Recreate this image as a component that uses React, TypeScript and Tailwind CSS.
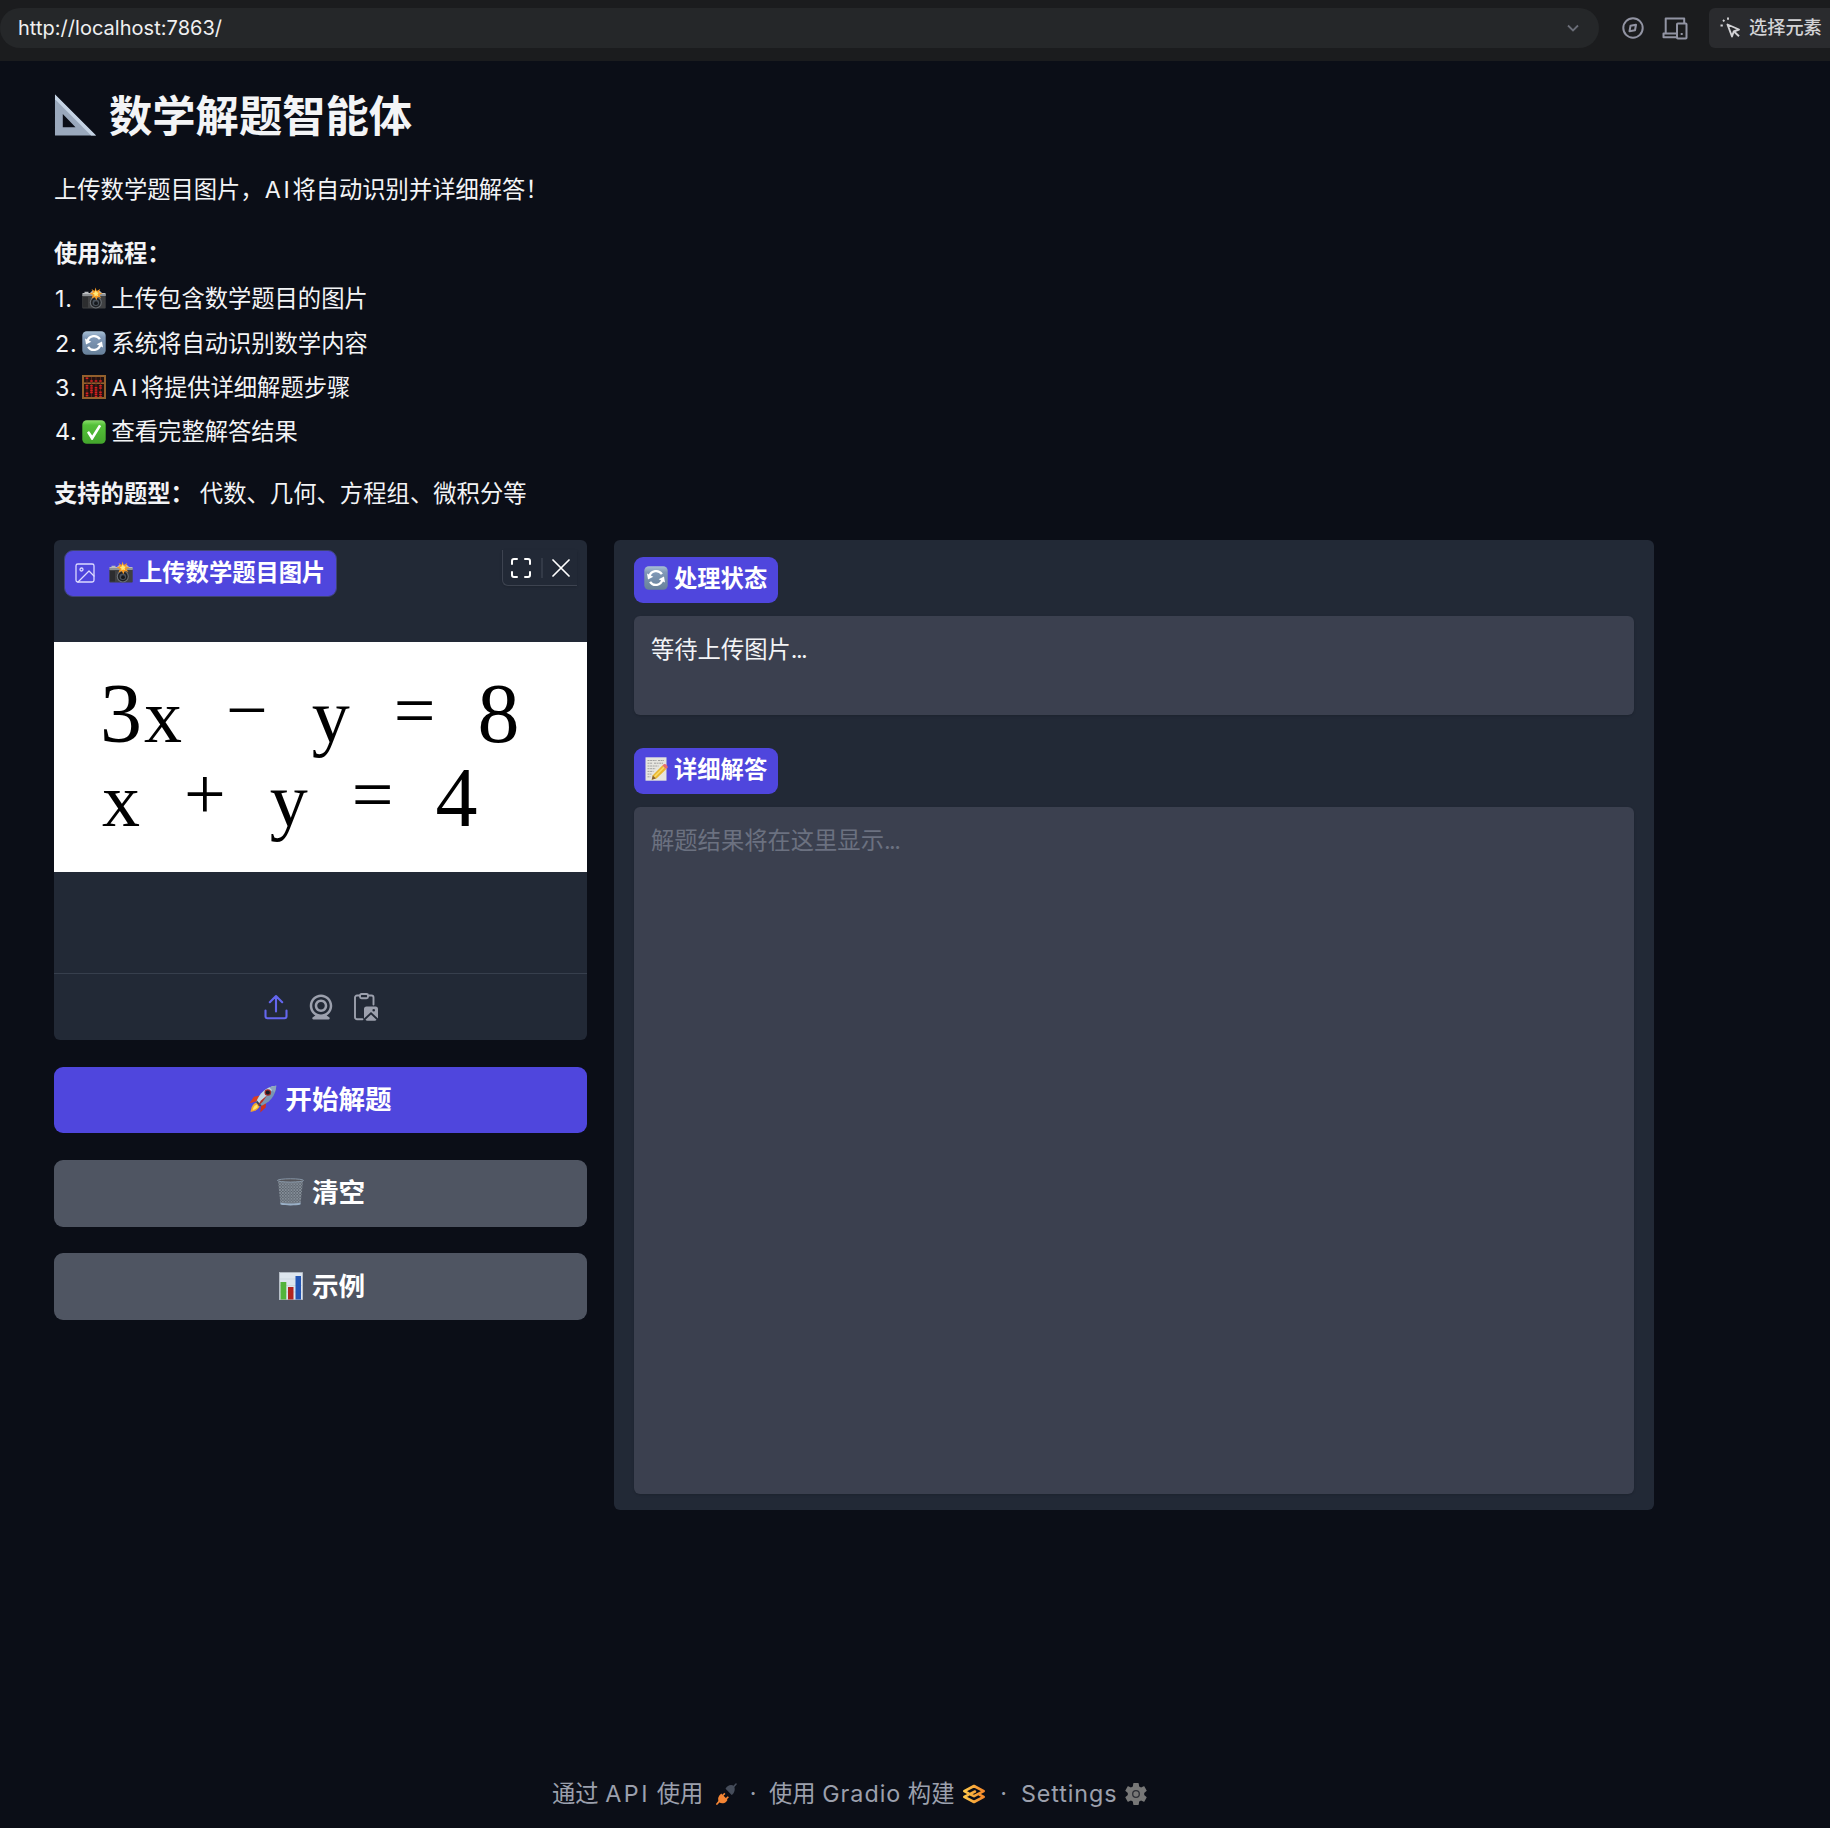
import React from 'react';

type IconProps = { className?: string };

const Ruler = ({ className }: IconProps) => (
  <svg viewBox="0 0 44 44" className={className}>
    <path fillRule="evenodd" d="M1 1 43 43H1ZM9 21V34.500H22Z" fill="#9aa8bc" />
    <path d="M1 1 43 43H38L1 6Z" fill="#c5d3e4" />
  </svg>
);

const Camera = ({ className }: IconProps) => (
  <svg viewBox="0 0 24 24" className={className}>
    <path d="M0.500 7V6h2V4.800h4V6H8l2-2h8l2 2h3.500v3Z" fill="#b9bcbf" />
    <rect x="0.300" y="7.500" width="23.400" height="14" rx="0.800" fill="#3f4042" />
    <path d="M0.300 7h23.400v2H0.300Z" fill="#8e9194" />
    <rect x="1" y="10" width="5" height="10.500" fill="#2c2d2f" />
    <circle cx="13.800" cy="15.500" r="6" fill="#6c7075" />
    <circle cx="13.800" cy="15.500" r="4.900" fill="#1f2124" />
    <circle cx="13.800" cy="15.800" r="3.300" fill="#4a525b" />
    <circle cx="14" cy="16.200" r="1.900" fill="#15181c" />
    <path d="m13.500 0.500 1.200 3.600 3.500-2-1.300 3.400 3.600.8-3.200 1.700 2 3-3.500-1.200-1.400 3.400-1.600-3.200-3.300 1.400 1.400-3.300L7.500 6.600l3.500-1.300L9.600 1.900l3 2Z" fill="#f59a23" />
    <path d="m13.800 3 1 2.300 2 .4-1.200 1.500.5 2-2-.8-1.700 1.200v-2.200l-1.700-1.200 2-.7Z" fill="#ffe879" />
  </svg>
);

const Refresh = ({ className }: IconProps) => (
  <svg viewBox="0 0 24 24" className={className}>
    <defs>
      <linearGradient id="refreshBg" x1="0" y1="0" x2="0" y2="1">
        <stop offset="0" stopColor="#a9c1d6" />
        <stop offset="0.250" stopColor="#8199b7" />
        <stop offset="1" stopColor="#67809a" />
      </linearGradient>
    </defs>
    <rect x="0.300" y="0.300" width="23.400" height="23.400" rx="4.500" fill="url(#refreshBg)" />
    <g fill="none" stroke="#fff" strokeWidth="2.300">
      <path d="M5.500 10.200a6.900 6.900 0 0 1 12.400-2" />
      <path d="M18.500 13.800a6.900 6.900 0 0 1-12.400 2" />
    </g>
    <path d="m3 7.500 1 6 5.300-2.800ZM21 16.500l-1-6-5.300 2.800Z" fill="#fff" />
  </svg>
);

const Abacus = ({ className }: IconProps) => (
  <svg viewBox="0 0 24 24" className={className}>
    <rect x="1" y="1" width="22" height="22" fill="#241210" stroke="#93602c" strokeWidth="2" />
    <path d="M1 8.200h22" stroke="#93602c" strokeWidth="1.600" />
    <path d="M5 2v20M9.500 2v20M14 2v20M18.500 2v20" stroke="#6d2a20" strokeWidth="0.800" />
    <g stroke="#d81f1f" strokeWidth="2.600" strokeDasharray="1.500 0.700">
      <path d="M5 2.500v2M9.500 5.300v2M14 5.300v2M18.500 5.300v2" />
      <path d="M5 10v4M9.500 10v9M14 12v10M18.500 10v4.400M5 17.500v4.500M18.500 16.500v5.500" />
    </g>
  </svg>
);

const Check = ({ className }: IconProps) => (
  <svg viewBox="0 0 24 24" className={className}>
    <defs>
      <linearGradient id="checkBg" x1="0" y1="0" x2="0" y2="1">
        <stop offset="0" stopColor="#8ce06c" />
        <stop offset="0.200" stopColor="#55c13a" />
        <stop offset="1" stopColor="#43a52c" />
      </linearGradient>
    </defs>
    <rect x="0.300" y="0.300" width="23.400" height="23.400" rx="4.500" fill="url(#checkBg)" />
    <path d="m5 12.600 2-1.500 3.200 4.400L17 4.800l2.200 1.100-8.600 14h-1Z" fill="#fff" />
  </svg>
);

const Memo = ({ className }: IconProps) => (
  <svg viewBox="0 0 24 24" className={className}>
    <rect x="1.500" y="0.300" width="21" height="23.400" fill="#e6e5df" />
    <path d="M3.500 3.500h9M14 3.500h6M3.500 6.200h5M10 6.200h9M3.500 9h11M3.500 11.700h8M3.500 14.400h6M3.500 17.100h4M3.500 19.800h3" stroke="#989898" strokeWidth="0.900" strokeDasharray="2 .6" />
    <path d="m7.700 22.800 1.100-4.600L18.300 8.600l3.800 3.600-9.600 9.300Z" fill="#e9b62f" />
    <path d="m9.800 19.200 9.900-9.700 1.100 1.100-9.700 9.700Z" fill="#f8db68" />
    <path d="m18.300 8.600 1.500-1.300c1.500-1.200 4.800 1.600 3.700 3.500l-1.400 1.400Z" fill="#e6716e" />
    <path d="m7.700 22.800 1.100-4.200 3 2.800Z" fill="#846137" />
  </svg>
);

const Rocket = ({ className }: IconProps) => (
  <svg viewBox="0 0 28 28" className={className}>
    <path d="m11 10.500-6 1.200-4.500 6.500 7.500-2Z" fill="#dd3f20" />
    <path d="m17 17-.3 5.500-5.500 5 1-7.500Z" fill="#cf321d" />
    <path d="M7.800 17.200C3.700 18.500 2.500 22 1.500 27c5-1 8.200-2.500 9.500-6.200Z" fill="#f3a52c" />
    <path d="M7.800 19.400c-2.600 1-3.600 3.200-4.100 5.600 2.800-.6 4.700-1.600 5.600-4Z" fill="#ffe66c" />
    <path d="M7 17.500C10.500 8 17 1.500 27.300.7 27 11 20 18 10.800 21.500Z" fill="#7895b2" />
    <path d="M7 17.500C10.500 8 17 1.500 27.300.7L9 19.500Z" fill="#c5d7e5" />
    <path d="M27.300.7c-2.600.2-5 .8-7 1.700l5.200 5c1-2.200 1.600-4.300 1.800-6.700Z" fill="#8da6be" />
    <path d="M7 17.500 10.800 21.500 12.700 20.700 7.900 15.500Z" fill="#3b4655" />
    <circle cx="18.800" cy="7.500" r="3.300" fill="#a32927" />
    <circle cx="18.800" cy="7.500" r="2.100" fill="#171b22" />
    <path d="m12 15.500 6-5-4.400 6.200-5.400 5Z" fill="#b92f24" />
  </svg>
);

const Trash = ({ className }: IconProps) => (
  <svg viewBox="0 0 28 28" className={className}>
    <defs>
      <pattern id="mesh" width="3" height="3" patternUnits="userSpaceOnUse">
        <rect width="3" height="3" fill="#5a626c" />
        <path d="M0 0 3 3M3 0 0 3" stroke="#9aa4af" strokeWidth="0.650" />
      </pattern>
    </defs>
    <path d="m1 2 2.600 24.500c4 1.500 16.800 1.500 20.800 0L27 2Z" fill="url(#mesh)" />
    <path d="M3.500 25c5 1.400 16 1.400 21 0l-.2 2c-5 1.200-15.600 1.200-20.600 0Z" fill="#9ab0c7" />
    <ellipse cx="14" cy="2" rx="13.500" ry="1.700" fill="#545459" stroke="#8e9fb1" strokeWidth="0.900" />
  </svg>
);

const Chart = ({ className }: IconProps) => (
  <svg viewBox="0 0 24 28" className={className}>
    <rect x="0.300" y="0.500" width="23.400" height="27.200" fill="#dce5ee" stroke="#bcc4cd" strokeWidth="0.600" />
    <path d="M1 7h22M1 13.500h22M1 20h22" stroke="#c5ced7" strokeWidth="0.600" />
    <rect x="1.500" y="10" width="5.800" height="17.500" fill="#53b43b" />
    <rect x="9" y="15" width="5.500" height="12.500" fill="#b12420" />
    <rect x="16.500" y="4" width="5.500" height="23.500" fill="#2356b5" />
  </svg>
);

const Plug = ({ className }: IconProps) => (
  <svg viewBox="0 0 22 24" className={className}>
    <path d="m1 22.500 3-3.500" stroke="#f58534" strokeWidth="1.800" strokeLinecap="round" />
    <path d="M3.300 20.700c-1.500-2.500-1.500-5 .2-7.200l2-2 1.200 1.200 2-2 1.200 1.200-2 2 2.400 2.400 2-2 1.200 1.200-2 2 .5.700-1.300 1.800c-2 2-5 2.300-7.400.7Z" fill="#f58534" />
    <path d="m21 1.500-3 3.500" stroke="#454c5a" strokeWidth="1.600" strokeLinecap="round" />
    <path d="M10 6.400c2-3.500 5.600-4.700 8.800-2.900 1.700 3.200.7 7.200-2.400 9.500Z" fill="#454c5a" />
  </svg>
);

const GradioMark = ({ className }: IconProps) => (
  <svg viewBox="0 0 24 20" className={className}>
    <defs>
      <linearGradient id="gradio" x1="0" y1="0" x2="1" y2="0">
        <stop offset="0" stopColor="#fdc84b" />
        <stop offset="1" stopColor="#f5892b" />
      </linearGradient>
    </defs>
    <g fill="none" stroke="url(#gradio)" strokeWidth="2.600" strokeLinejoin="round" strokeLinecap="round">
      <path d="M6.500 9.300 2.300 7.200 12 2l9.700 5.200-9.700 5-4.200-2 5.200-2.700" />
      <path d="M17.500 10.700l4.200 2.100L12 18l-9.700-5.200 4-2" />
    </g>
  </svg>
);

const Gear = ({ className }: IconProps) => (
  <svg viewBox="2 1.800 20 20.400" className={className}>
    <path fill="#777777" d="M19.430 12.980c.04-.32.070-.64.070-.98s-.03-.66-.07-.98l2.110-1.650c.19-.15.24-.42.120-.64l-2-3.460c-.12-.22-.39-.3-.61-.22l-2.490 1c-.52-.4-1.080-.73-1.690-.98l-.38-2.650A.49.49 0 0 0 14 2h-4c-.25 0-.46.180-.49.420l-.38 2.650c-.61.250-1.170.590-1.690.980l-2.490-1c-.23-.09-.49 0-.61.220l-2 3.460c-.13.220-.07.490.120.640l2.110 1.650c-.04.320-.07.650-.07.980s.03.660.070.980l-2.110 1.650c-.19.150-.24.420-.12.640l2 3.460c.12.220.39.300.61.220l2.490-1c.52.400 1.080.730 1.690.980l.38 2.650c.03.240.24.420.49.420h4c.25 0 .46-.18.490-.42l.38-2.650c.61-.25 1.170-.59 1.690-.98l2.490 1c.23.090.49 0 .61-.22l2-3.460c.12-.22.070-.49-.12-.64Z" />
    <circle cx="12" cy="12" r="3" fill="#777777" stroke="#2c2e35" strokeWidth="1.200" />
  </svg>
);

const ImageIcon = ({ className }: IconProps) => (
  <svg viewBox="0 0 24 24" fill="none" stroke="currentColor" strokeWidth="1.300" strokeLinecap="round" strokeLinejoin="round" className={className}>
    <rect x="3" y="3" width="18" height="18" rx="1.800" />
    <circle cx="8.500" cy="8.500" r="1.500" />
    <path d="m21 15-5-5L5 21" />
  </svg>
);

const Upload = ({ className }: IconProps) => (
  <svg viewBox="0 0 24 26" fill="none" stroke="currentColor" strokeWidth="2.100" strokeLinecap="round" strokeLinejoin="round" className={className}>
    <path d="M12 17.500V2M5.800 8.200 12 2l6.200 6.200M1.500 16.500v5.800a2 2 0 0 0 2 2h17a2 2 0 0 0 2-2v-5.800" />
  </svg>
);

const Webcam = ({ className }: IconProps) => (
  <svg viewBox="0 0 24 24" fill="currentColor" className={className}>
    <path d="M12 2c-4.963 0-9 4.038-9 9c0 3.328 1.820 6.232 4.513 7.790l-2.067 1.378A1 1 0 0 0 6 22h12a1 1 0 0 0 .555-1.832l-2.067-1.378C19.180 17.232 21 14.328 21 11c0-4.962-4.037-9-9-9zm0 16c-3.859 0-7-3.141-7-7c0-3.860 3.141-7 7-7s7 3.140 7 7c0 3.859-3.141 7-7 7z" />
    <path d="M12 6c-2.757 0-5 2.243-5 5s2.243 5 5 5s5-2.243 5-5s-2.243-5-5-5zm0 8c-1.654 0-3-1.346-3-3s1.346-3 3-3s3 1.346 3 3s-1.346 3-3 3z" />
  </svg>
);

const PasteImage = ({ className }: IconProps) => (
  <svg viewBox="0 0 24 28" className={className}>
    <path d="M8.500 26.200H3a2 2 0 0 1-2-2V4.500a2 2 0 0 1 2-2h2.500M14.500 2.500H17.500a2 2 0 0 1 2 2V11.500" fill="none" stroke="currentColor" strokeWidth="1.900" strokeLinecap="round" />
    <rect x="6" y="1" width="8" height="4.200" rx="1.500" fill="none" stroke="currentColor" strokeWidth="1.900" />
    <path fillRule="evenodd" d="M12.500 13.500h9a2.500 2.500 0 0 1 2.500 2.500v9.500l-7-6.500-7 6.500V16a2.500 2.500 0 0 1 2.500-2.500Zm7.200 2.500a1.300 1.300 0 1 0 0 2.600 1.300 1.300 0 0 0 0-2.600Z" fill="currentColor" />
    <path d="m17 21.500 5.500 5.300c-.4.600-1 .9-1.700.9h-7.600c-.7 0-1.300-.3-1.700-.9Z" fill="currentColor" />
  </svg>
);

const Compass = ({ className }: IconProps) => (
  <svg viewBox="0 0 22 22" fill="none" stroke="currentColor" strokeWidth="2" strokeLinejoin="round" className={className}>
    <circle cx="11" cy="11" r="9.700" />
    <path d="m8.500 8.700 5.500-1-1 5.600-5.500 1Z" />
  </svg>
);

const Devices = ({ className }: IconProps) => (
  <svg viewBox="0 0 26 23" fill="none" stroke="currentColor" strokeWidth="2" strokeLinejoin="round" className={className}>
    <path d="M14.500 20.200H1.500v-3.700h13M3.700 16.500v-15h18.500v4.700" />
    <rect x="15" y="6.500" width="9.500" height="15" rx="0.800" />
    <path d="M19.700 16v2" />
  </svg>
);

const Picker = ({ className }: IconProps) => (
  <svg viewBox="0 0 22 22" fill="none" stroke="currentColor" strokeWidth="1.900" strokeLinejoin="round" className={className}>
    <path d="m7.500 7.500 4.500 12 1.700-5 5.300-2Z" />
    <path d="m14 14.500 5 4.800" />
    <path d="M8 0.500v2.200M3 3l1.400 1.400M0.500 8.500h2.300" />
  </svg>
);

const FLOW = [
  { icon: <Camera className="h-6 w-6" />, text: '上传包含数学题目的图片' },
  { icon: <Refresh className="h-6 w-6" />, text: '系统将自动识别数学内容' },
  { icon: <Abacus className="h-6 w-6" />, latin: 'AI', text: '将提供详细解题步骤' },
  { icon: <Check className="h-6 w-6" />, text: '查看完整解答结果' },
];

const Op = ({ children }: { children: string }) => <span className="relative -top-[7px] text-[74px]">{children}</span>;
const Var = ({ children }: { children: string }) => <span className="mx-[2px] text-[76px]">{children}</span>;

function TopBar() {
  return (
    <header className="flex h-[61px] items-start overflow-hidden bg-[#1b1c1e] pt-2">
      <div className="flex h-10 w-[1599px] shrink-0 items-center justify-between rounded-full bg-[#252729] pr-5 pl-[18px]">
        <span className="text-[20px] leading-10 tracking-[0.030px] text-[#f0f0f1]">http://localhost:7863/</span>
        <svg viewBox="0 0 12 8" fill="none" stroke="#6b6e78" strokeWidth="1.800" className="h-2 w-3">
          <path d="m1 1.500 5 5 5-5" />
        </svg>
      </div>
      <Compass className="mt-[9px] ml-[23px] h-[22px] w-[22px] shrink-0 text-[#9294a3]" />
      <Devices className="mt-[9px] ml-[18px] h-[23px] w-[26px] shrink-0 text-[#9294a3]" />
      <div className="ml-[21px] flex h-10 w-[140px] shrink-0 items-center rounded-l-md bg-[#2a2b2e] pl-[11px] text-[#d3d3d6]">
        <Picker className="h-[22px] w-[22px]" />
        <span className="ml-[7px] text-[18.200px] font-medium whitespace-nowrap">选择元素</span>
      </div>
    </header>
  );
}

function UploadCard() {
  return (
    <section className="flex h-[500px] flex-col overflow-hidden rounded-md bg-[#222936]">
      <div className="flex h-[102px] items-start justify-between pt-[10px] pr-[10px] pl-[10px]">
        <div className="flex h-[47px] w-[273px] items-center rounded-[9px] border border-[#3f4473] bg-[#4f46dd] pl-2 text-white">
          <ImageIcon className="h-6 w-6 text-[#dcdaff]" />
          <Camera className="ml-3 h-6 w-6" />
          <span className="ml-[6px] text-[23.300px] leading-[44px] font-bold whitespace-nowrap">上传数学题目图片</span>
        </div>
        <div className="flex h-9 w-[75px] items-center rounded-bl-md border-b border-l border-[#3d4350] pt-px pl-2 text-white shadow-sm">
          <svg viewBox="0 0 20 20" fill="none" stroke="currentColor" strokeWidth="2" strokeLinecap="round" className="h-5 w-5">
            <path d="M1 6V3a2 2 0 0 1 2-2h3M14 1h3a2 2 0 0 1 2 2v3M19 14v3a2 2 0 0 1-2 2h-3M6 19H3a2 2 0 0 1-2-2v-3" />
          </svg>
          <span className="ml-[10px] h-5 border-l-2 border-[#333a47]" />
          <svg viewBox="0 0 18 18" stroke="currentColor" strokeWidth="1.700" strokeLinecap="round" className="ml-[9px] h-[18px] w-[18px]">
            <path d="m1 1 16 16M17 1 1 17" />
          </svg>
        </div>
      </div>
      <div className="h-[230px] bg-white pt-[30px] pl-[46px] font-['Liberation_Serif','Noto_Sans_CJK_SC',serif] text-[84px] leading-[84px] [word-spacing:21px] whitespace-nowrap text-black">
        <div className="h-[84px]">3<Var>x</Var> <Op>−</Op> <Var>y</Var> <Op>=</Op> 8</div>
        <div className="h-[84px]"><Var>x</Var> <Op>+</Op> <Var>y</Var> <Op>=</Op> 4</div>
      </div>
      <div className="h-[102px] border-b border-[#373f4d]" />
      <div className="flex flex-1 items-center justify-center gap-[18px] pt-px text-[#9ca0ad]">
        <Upload className="h-[26px] w-6 text-[#6466ee]" />
        <Webcam className="h-[30px] w-[30px]" />
        <PasteImage className="h-7 w-6" />
      </div>
    </section>
  );
}

function ActionButton({ icon, label, className }: { icon: React.ReactNode; label: string; className: string }) {
  return (
    <button className={`flex w-full items-center justify-center gap-2 rounded-[9px] text-[26.600px] font-bold text-white ${className}`}>
      {icon}
      <span className="leading-[40px]">{label}</span>
    </button>
  );
}

function OutputLabel({ icon, label }: { icon: React.ReactNode; label: string }) {
  return (
    <div className="flex h-[46px] w-36 items-start rounded-[9px] bg-[#4f46dd] pt-[9px] pl-[10px] text-white">
      {icon}
      <span className="-mt-[3px] ml-[6px] text-[23.300px] leading-[32px] font-bold whitespace-nowrap">{label}</span>
    </div>
  );
}

export default function App() {
  return (
    <div className="flex h-[1828px] w-[1830px] flex-col overflow-hidden bg-[#0b0e17] font-['Inter','Noto_Sans_CJK_SC',sans-serif] text-[23.300px] text-[#f3f4f6]">
      <TopBar />
      <main className="w-[1654px] pl-[54px]">
        <h1 className="mt-[30px] flex h-12 items-center text-[43.300px] leading-[48px] font-bold">
          <Ruler className="h-[44px] w-[43px]" />
          <span className="mt-px ml-3">数学解题智能体</span>
        </h1>
        <p className="mt-[29px] h-11 leading-[44px]">
          上传数学题目图片，<span className="ml-px tracking-[2.700px]">AI</span>将自动识别并详细解答！
        </p>
        <p className="mt-5 h-[44.500px] leading-[44px] font-bold">使用流程：</p>
        <ol>
          {FLOW.map((step, i) => (
            <li key={step.text} className="flex h-[44.400px] items-center leading-[45px]">
              <span className="w-[27.500px] pl-px tracking-[0.800px]">{i + 1}.</span>
              {step.icon}
              <span className="ml-[6px]">
                {step.latin && <span className="tracking-[3.400px]">{step.latin}</span>}
                {step.text}
              </span>
            </li>
          ))}
        </ol>
        <p className="mt-[18.400px] flex h-11 leading-[44px]">
          <strong className="font-bold">支持的题型：</strong>
          <span className="ml-[6px] tracking-[0.050px]">代数、几何、方程组、微积分等</span>
        </p>
        <div className="mt-[23.500px] flex items-start gap-[27px]">
          <div className="w-[533px]">
            <UploadCard />
            <ActionButton className="mt-[27px] h-[66px] bg-[#4f46dd] pb-0.5" icon={<Rocket className="h-7 w-7" />} label="开始解题" />
            <ActionButton className="mt-[27px] h-[67px] bg-[#4f5562] pb-0.5 pl-px" icon={<Trash className="h-7 w-[27px]" />} label="清空" />
            <ActionButton className="mt-[26px] h-[67px] bg-[#4f5562] pl-[3px]" icon={<Chart className="mr-px h-7 w-6" />} label="示例" />
          </div>
          <section className="h-[970px] w-[1040px] rounded-md bg-[#222936] px-5 pt-[17px]">
            <OutputLabel icon={<Refresh className="h-6 w-6" />} label="处理状态" />
            <div className="mt-[13px] h-[99px] rounded-md bg-[#3b404f] px-[17px] pt-[17px] leading-[33px] shadow-sm">
              等待上传图片<span className="tracking-[-1.600px]">...</span>
            </div>
            <div className="mt-[33px]">
              <OutputLabel icon={<Memo className="h-6 w-6" />} label="详细解答" />
            </div>
            <div className="mt-[13px] h-[687px] rounded-md bg-[#3b404f] px-[17px] pt-[17px] leading-[33px] text-[#6b7180] shadow-sm">
              解题结果将在这里显示<span className="tracking-[-1.600px]">...</span>
            </div>
          </section>
        </div>
      </main>
      <footer className="mt-[262px] flex h-11 items-center pl-[552px] leading-[44px] whitespace-nowrap text-[#9ca0ad]">
        <span className="w-[164px]">
          通过 <span className="tracking-[2.600px]">API</span> 使用
        </span>
        <Plug className="h-6 w-[21px]" />
        <span className="w-8 text-center">·</span>
        <span className="w-[193px]">
          使用 <span className="tracking-[1px]">Gradio</span> 构建
        </span>
        <GradioMark className="h-5 w-6" />
        <span className="w-[35px] text-center">·</span>
        <span className="w-[104px] tracking-[0.900px]">Settings</span>
        <Gear className="h-[24px] w-[22px]" />
      </footer>
    </div>
  );
}
